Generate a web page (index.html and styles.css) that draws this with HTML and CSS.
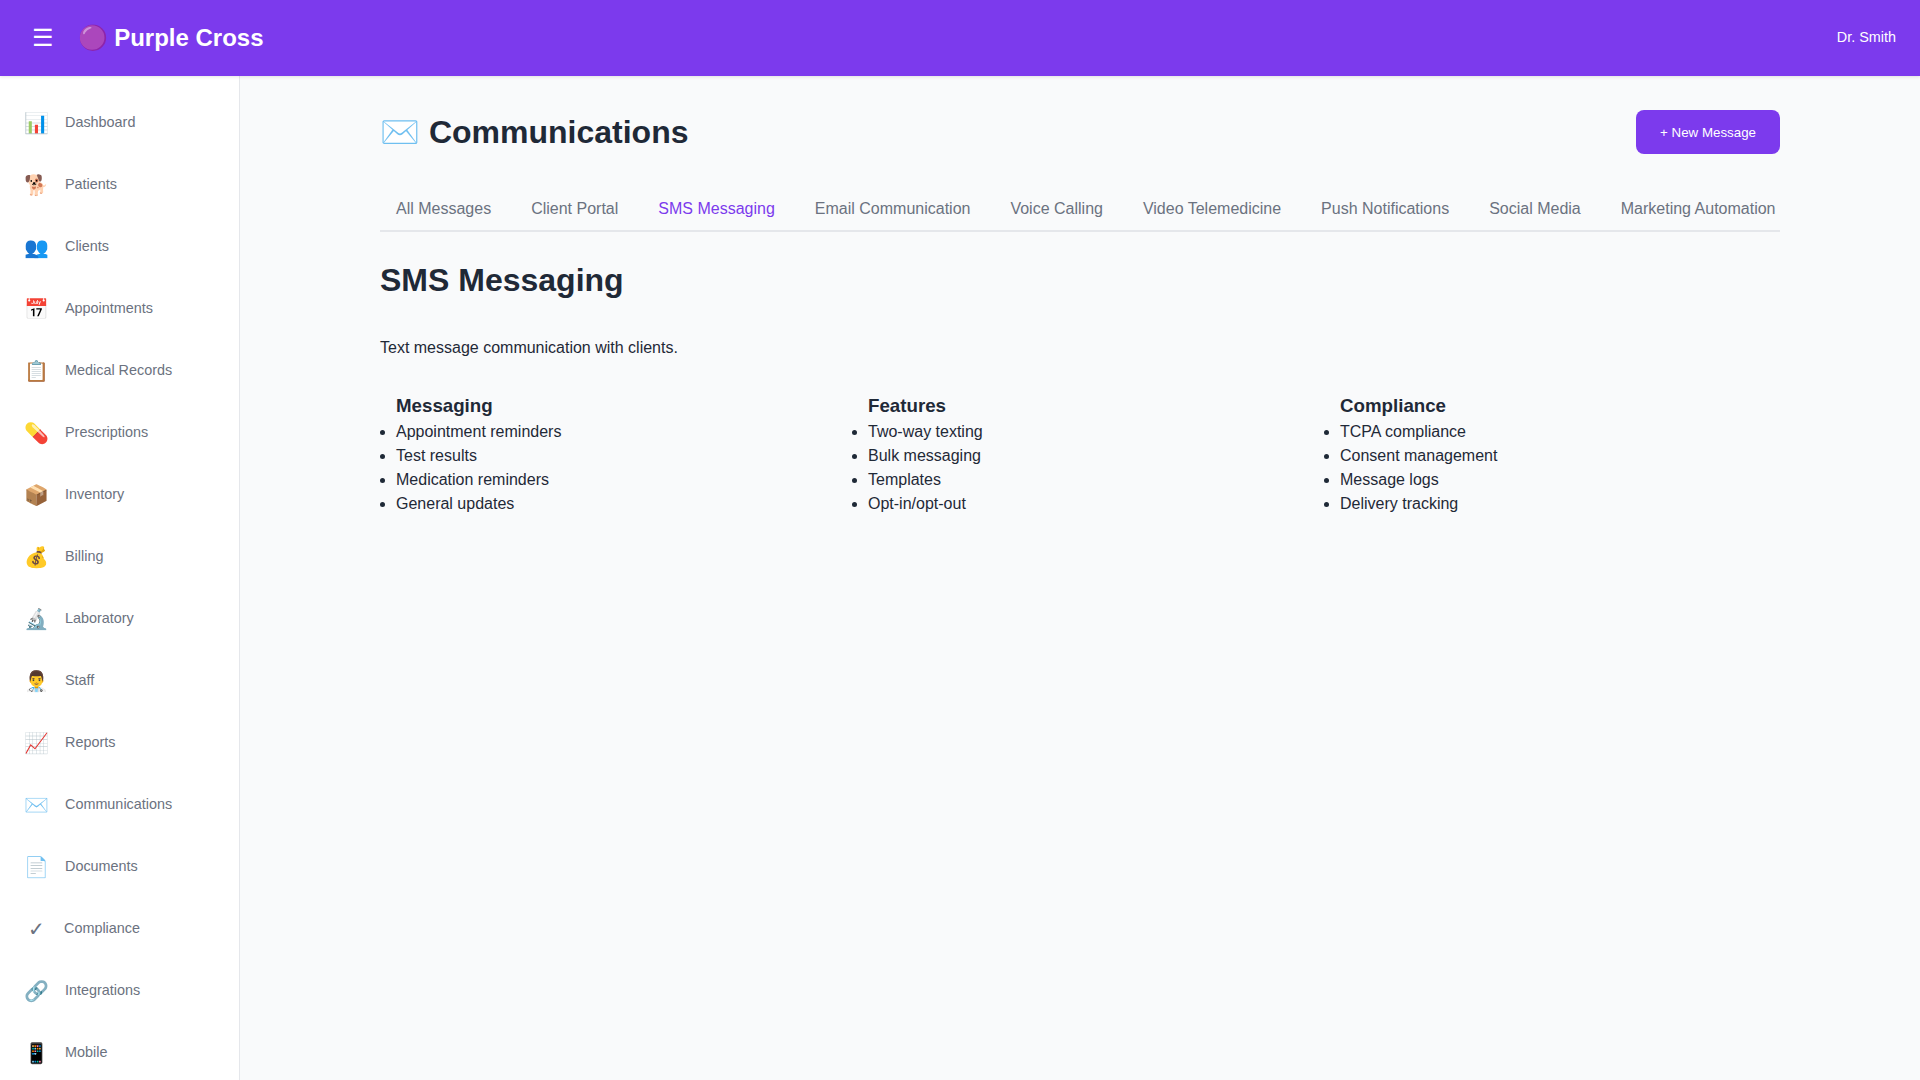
FILE: index.html
```html
<!DOCTYPE html>
<html lang="en">
<head>
<meta charset="utf-8">
<title>Purple Cross</title>
<link rel="stylesheet" href="styles.css">
</head>
<body>
<header class="topbar">
  <div class="brand">
    <button class="menu-btn">☰</button>
    <div class="logo"><span>🟣</span> Purple Cross</div>
  </div>
  <div class="user">Dr. Smith</div>
</header>
<div class="shell">
  <nav class="sidebar">
    <a class="nav-item"><span class="nav-icon">📊</span><span>Dashboard</span></a>
    <a class="nav-item"><span class="nav-icon">🐕</span><span>Patients</span></a>
    <a class="nav-item"><span class="nav-icon">👥</span><span>Clients</span></a>
    <a class="nav-item"><span class="nav-icon">📅</span><span>Appointments</span></a>
    <a class="nav-item"><span class="nav-icon">📋</span><span>Medical Records</span></a>
    <a class="nav-item"><span class="nav-icon">💊</span><span>Prescriptions</span></a>
    <a class="nav-item"><span class="nav-icon">📦</span><span>Inventory</span></a>
    <a class="nav-item"><span class="nav-icon">💰</span><span>Billing</span></a>
    <a class="nav-item"><span class="nav-icon">🔬</span><span>Laboratory</span></a>
    <a class="nav-item"><span class="nav-icon">👨‍⚕️</span><span>Staff</span></a>
    <a class="nav-item"><span class="nav-icon">📈</span><span>Reports</span></a>
    <a class="nav-item"><span class="nav-icon">✉️</span><span>Communications</span></a>
    <a class="nav-item"><span class="nav-icon">📄</span><span>Documents</span></a>
    <a class="nav-item"><span class="nav-icon">✓</span><span>Compliance</span></a>
    <a class="nav-item"><span class="nav-icon">🔗</span><span>Integrations</span></a>
    <a class="nav-item"><span class="nav-icon">📱</span><span>Mobile</span></a>
  </nav>
  <main class="main">
    <div class="container">
      <div class="page-head">
        <h1 class="page-title"><span>✉️</span> Communications</h1>
        <button class="primary-btn">+ New Message</button>
      </div>
      <div class="tabs">
        <a class="tab">All Messages</a>
        <a class="tab">Client Portal</a>
        <a class="tab active">SMS Messaging</a>
        <a class="tab">Email Communication</a>
        <a class="tab">Voice Calling</a>
        <a class="tab">Video Telemedicine</a>
        <a class="tab">Push Notifications</a>
        <a class="tab">Social Media</a>
        <a class="tab">Marketing Automation</a>
      </div>
      <h2 class="section-title">SMS Messaging</h2>
      <p class="intro">Text message communication with clients.</p>
      <div class="columns">
        <section class="column">
          <h3>Messaging</h3>
          <ul>
            <li>Appointment reminders</li>
            <li>Test results</li>
            <li>Medication reminders</li>
            <li>General updates</li>
          </ul>
        </section>
        <section class="column">
          <h3>Features</h3>
          <ul>
            <li>Two-way texting</li>
            <li>Bulk messaging</li>
            <li>Templates</li>
            <li>Opt-in/opt-out</li>
          </ul>
        </section>
        <section class="column">
          <h3>Compliance</h3>
          <ul>
            <li>TCPA compliance</li>
            <li>Consent management</li>
            <li>Message logs</li>
            <li>Delivery tracking</li>
          </ul>
        </section>
      </div>
    </div>
  </main>
</div>
</body>
</html>
```
FILE: styles.css
```css
* { box-sizing: border-box; }
html, body { margin: 0; height: 100%; overflow: hidden; }
body {
  font-family: "Liberation Sans", Arial, sans-serif;
  font-size: 16px;
  line-height: 1.5;
  color: #1f2937;
  background: #f9fafb;
  display: flex;
  flex-direction: column;
}
.topbar {
  height: 76px;
  flex: none;
  background: #7c3aed;
  color: #fff;
  display: flex;
  align-items: center;
  justify-content: space-between;
  padding: 0 24px;
  box-shadow: 0 1px 3px rgba(0,0,0,.1);
  position: relative;
  z-index: 2;
}
.brand { display: flex; align-items: center; gap: 15.5px; }
.menu-btn {
  background: none;
  border: 0;
  color: #fff;
  font-size: 24px;
  padding: 8px;
  font-family: inherit;
  line-height: 1.5;
}
.logo { font-size: 24px; font-weight: 700; line-height: 1.5; }
.user { font-size: 14.4px; }
.shell { flex: 1; display: flex; min-height: 0; }
.sidebar {
  width: 240px;
  flex: none;
  background: #fff;
  border-right: 1px solid #e5e7eb;
  padding: 16px 0;
  overflow: hidden;
}
.nav-item {
  display: flex;
  align-items: center;
  gap: 16px;
  height: 62px;
  padding: 0 24px;
  font-size: 14.4px;
  color: #6b7280;
}
.nav-icon { font-size: 20px; min-width: 24px; text-align: center; }
.main { flex: 1; padding: 32px; min-width: 0; }
.container { max-width: 1400px; margin: 0 auto; }
.page-head {
  display: flex;
  align-items: center;
  justify-content: space-between;
  margin-bottom: 28px;
}
.page-title { margin: 0; font-size: 32px; font-weight: 700; line-height: 1.5; }
.primary-btn {
  background: #7c3aed;
  color: #fff;
  border: 0;
  border-radius: 8px;
  height: 44px;
  padding: 1px 24px 0;
  font-family: inherit;
  font-size: 13.333px;
  line-height: 20px;
}
.tabs { display: flex; gap: 40px; padding-left: 16px; border-bottom: 2px solid #e5e7eb; }
.tab { padding: 13px 0 9px; color: #6b7280; white-space: nowrap; }
.tab.active { color: #7c3aed; }
.section-title { margin: 24px 0 32px; font-size: 32px; line-height: 1.5; }
.intro { margin: 0 0 32px; }
.columns { display: grid; grid-template-columns: repeat(3, 1fr); gap: 16px; }
.column { padding-left: 16px; }
.column h3 { margin: 0; font-size: 18.72px; line-height: 1.5; }
.column ul { margin: 0; padding: 0; }
```
